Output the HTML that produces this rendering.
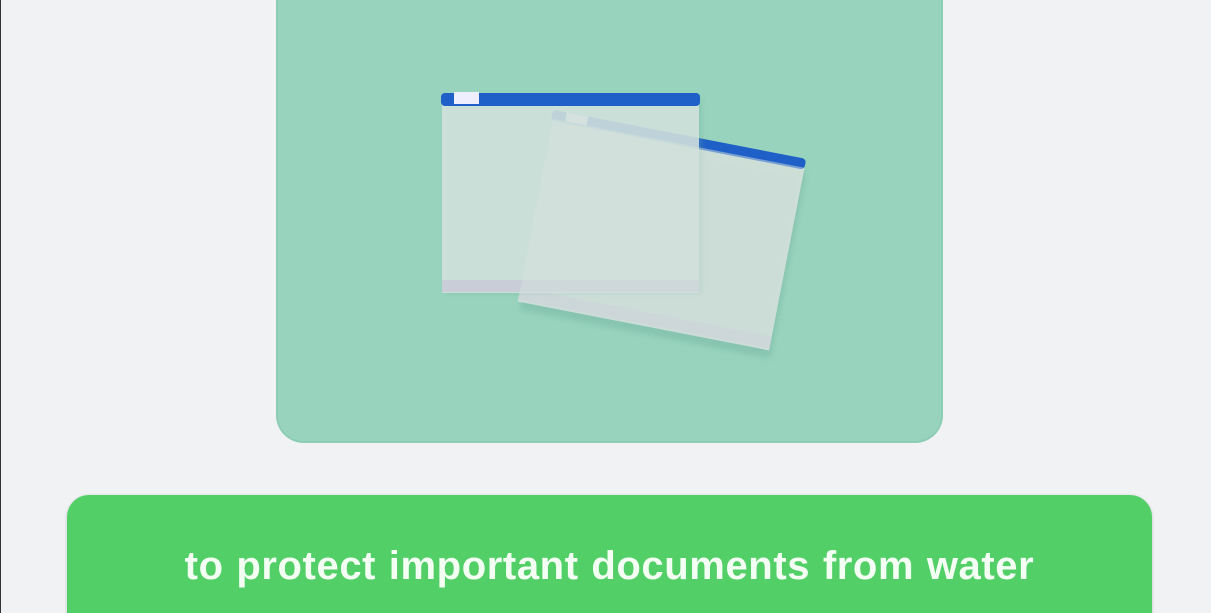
<!DOCTYPE html>
<html style="overflow:hidden"><head><style>
html,body{overflow:hidden}
body{margin:0;width:1211px;height:613px;background:#f1f2f4;position:relative;overflow:hidden;font-family:"Liberation Sans",sans-serif;border-left:1px solid #333;box-sizing:border-box}
.card{position:absolute;left:275px;top:-30px;width:667px;height:473px;background:#98d4bd;border-radius:28px;box-shadow:0 0 0 2px #8ecdb5 inset}
.btn{position:absolute;left:66px;top:495px;width:1085px;height:118px;background:#53cf68;border-radius:22px 22px 0 0;box-shadow:0 1px 3px rgba(0,0,0,.2)}
.btn span{position:absolute;left:0;right:0;top:49px;text-align:center;color:#f4fff4;font-weight:bold;font-size:40px;letter-spacing:0.6px;word-spacing:1px}
</style></head><body>
<div class="card"></div>
<svg style="position:absolute;left:0;top:0" width="1211" height="613">
<defs><filter id="b"><feGaussianBlur stdDeviation="3"/></filter></defs>
<g transform="translate(553 115) rotate(11)">
<rect x="3" y="8" width="256" height="190" fill="#6aa89a" opacity=".35" filter="url(#b)"/>
<rect x="0" y="4" width="256" height="186" fill="#d0ddd8" opacity=".85"/>
<rect x="0" y="176" width="256" height="12" fill="#c6cbd6"/>
<rect x="-2" y="-5" width="258" height="11" rx="4" fill="#1e5fc8"/>
<rect x="12" y="-5" width="22" height="9" fill="#eef"/>
</g>
<rect x="444" y="98" width="257" height="196" fill="#6aa89a" opacity=".3" filter="url(#b)"/>
<rect x="441" y="102" width="257" height="191" fill="#d6e3de" opacity=".85"/>
<rect x="441" y="280" width="257" height="12" fill="#c8cdd8"/>
<rect x="440" y="93" width="259" height="13" rx="4" fill="#1e5fc8"/>
<rect x="453" y="92" width="25" height="12" fill="#eef"/>
<g transform="translate(553 115) rotate(11)">
<rect x="0" y="4" width="256" height="186" fill="#d4e1dc" opacity=".5"/>
</g>
</svg>
<div class="btn"><span>to protect important documents from water</span></div>
</body></html>
